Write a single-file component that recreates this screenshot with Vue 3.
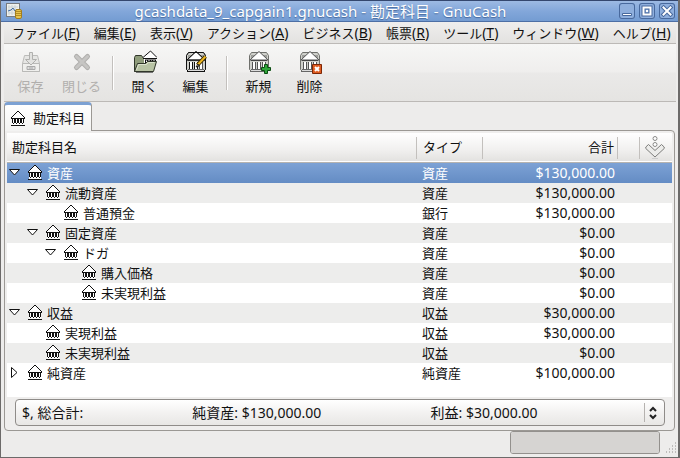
<script setup>
import { ref } from 'vue'

const menus = [
  ['ファイル', 'F'], ['編集', 'E'], ['表示', 'V'], ['アクション', 'A'], ['ビジネス', 'B'],
  ['帳票', 'R'], ['ツール', 'T'], ['ウィンドウ', 'W'], ['ヘルプ', 'H'],
]

const toolGroups = [
  [{ id: 'save', label: '保存', disabled: true }, { id: 'close', label: '閉じる', disabled: true }],
  [{ id: 'open', label: '開く' }, { id: 'edit', label: '編集' }],
  [{ id: 'new', label: '新規' }, { id: 'delete', label: '削除' }],
]

const accounts = [
  { name: '資産', type: '資産', total: '$130,000.00', level: 0, state: 'open' },
  { name: '流動資産', type: '資産', total: '$130,000.00', level: 1, state: 'open' },
  { name: '普通預金', type: '銀行', total: '$130,000.00', level: 2 },
  { name: '固定資産', type: '資産', total: '$0.00', level: 1, state: 'open' },
  { name: 'ドガ', type: '資産', total: '$0.00', level: 2, state: 'open' },
  { name: '購入価格', type: '資産', total: '$0.00', level: 3 },
  { name: '未実現利益', type: '資産', total: '$0.00', level: 3 },
  { name: '収益', type: '収益', total: '$30,000.00', level: 0, state: 'open' },
  { name: '実現利益', type: '収益', total: '$30,000.00', level: 1 },
  { name: '未実現利益', type: '収益', total: '$0.00', level: 1 },
  { name: '純資産', type: '純資産', total: '$100,000.00', level: 0, state: 'closed' },
]
const selected = ref(0)

const gap = '\u00a0'.repeat(30)
const summary = ['$, 総合計:', '純資産: $130,000.00', '利益: $30,000.00'].join(gap)
</script>

<template>
  <div class="window">
    <svg class="defs" width="0" height="0" aria-hidden="true">
      <symbol id="bank" viewBox="0 0 14 15">
        <path d="M6 1h2v1h1v1h2v1h1v1h1v1h1v2h-1v6H1V8H0V6h1V5h1V4h1V3h2V2h1z" fill="#fff" />
        <path d="M6 0h2v1H6zM5 1h1v1H5zM8 1h1v1H8zM4 2h1v1H4zM9 2h1v1H9zM3 3h1v1H3zM10 3h1v1h-1zM2 4h1v1H2zM11 4h1v1h-1zM1 5h1v1H1zM12 5h1v1h-1zM0 6h1v1H0zM13 6h1v1h-1zM0 7h14v1H0zM1 8h1v4H1zM3 8h2v4H3zM6 8h2v4H6zM9 8h2v4H9zM12 8h1v4h-1zM2 12h1v1H2zM5 12h1v1H5zM8 12h1v1H8zM11 12h1v1h-1zM0 14h14v1H0z" fill="#111" />
      </symbol>
      <symbol id="building" viewBox="0 0 24 24">
        <path d="M4.500 2.500h15l2 3v14l-2 2h-15l-2-2v-14z" fill="#cfd0cb" stroke="#6f706c" />
        <path d="M4 5h4v3H4zM16 5h4v3h-4z" fill="#9d9e9a" />
        <path d="M3 10 12 1.500 21 10z" fill="#fff" stroke="#555" />
        <path d="M4 10.500h16" stroke="#444" />
        <path d="M5 12h3v7H5zM10.500 12h3v7h-3zM16 12h3v7h-3z" fill="#fff" />
        <path d="M5.500 12v7M8.500 12v7M10.500 12v7M13.500 12v7M15.500 12v7M18.500 12v7" stroke="#555" />
        <path d="M4 19.500h16M3 21.500h18" stroke="#666" />
        <path d="M4 20.500h16" stroke="#ddd" />
      </symbol>
    </svg>

    <header class="titlebar">
      <svg class="app-icon" viewBox="0 0 16 16" aria-hidden="true">
        <rect x=".5" y=".5" width="13" height="13" fill="#eef0ec" stroke="#777b80" />
        <path d="M3 2v10M6 2v10M9 2v10M2 4h10M2 7h10M2 10h10" stroke="#cbd3d6" fill="none" />
        <path d="m2 8 3-1 2-2 2 3 2-2" stroke="#436ea5" fill="none" />
        <rect x="9.500" y="6.500" width="6" height="9" rx="1.500" fill="#e8c650" stroke="#a37d1c" />
        <path d="M10 8.500h5M10 10.500h5M10 12.500h5" stroke="#b28c24" />
      </svg>
      <h1>gcashdata_9_capgain1.gnucash - 勘定科目 - GnuCash</h1>
      <div class="win-buttons">
        <button aria-label="最小化"><svg viewBox="0 0 16 16"><path d="M3.500 10.500h9v2h-9z" fill="#fff" stroke="#48699d" /></svg></button>
        <button aria-label="最大化"><svg viewBox="0 0 16 16"><path d="M4.500 4.500h7v7h-7z" fill="none" stroke="#48699d" stroke-width="4" /><path d="M4.500 4.500h7v7h-7z" fill="none" stroke="#fff" stroke-width="2" /><path d="M7 7h2v2H7z" fill="#fff" /></svg></button>
        <button aria-label="閉じる"><svg viewBox="0 0 16 16"><path d="m4.500 4.500 7 7m0-7-7 7" stroke="#48699d" stroke-width="4" stroke-linecap="square" /><path d="m4.500 4.500 7 7m0-7-7 7" stroke="#fff" stroke-width="2" stroke-linecap="square" /></svg></button>
      </div>
    </header>

    <nav class="menubar">
      <button v-for="[label, key] in menus" :key="key">{{ label }}<span class="latin">(<u>{{ key }}</u>)</span></button>
    </nav>

    <div class="toolbar" role="toolbar">
      <div v-for="(group, i) in toolGroups" :key="i" class="group">
        <button v-for="t in group" :key="t.id" :disabled="t.disabled">
          <svg viewBox="0 0 24 24" aria-hidden="true">
            <template v-if="t.id === 'save'">
              <path d="M5.500 5.500h13l2 8v8h-17v-8z" fill="#e6e6e4" stroke="#bcbcba" />
              <path d="M3.500 13.500h17v8h-17z" fill="#efefed" stroke="#b9b9b7" />
              <path d="M10.500 2.500h3v7h4L12 15 6.500 9.500h4z" fill="#e2e2e0" stroke="#b0b0ae" />
              <path d="M8 16.500h8v3H8z" fill="#ddd" stroke="#aaa" />
              <path d="M10 18h4" stroke="#aaa" />
            </template>
            <template v-else-if="t.id === 'close'">
              <path d="m6.500 6.500 11 11m0-11-11 11" stroke="#b0afad" stroke-width="5" stroke-linecap="round" />
              <path d="m6.500 6.500 11 11m0-11-11 11" stroke="#c6c5c3" stroke-width="3" stroke-linecap="round" />
            </template>
            <template v-else-if="t.id === 'open'">
              <path d="M1.500 21.500V7.500l1-2h6l2 3h8v13z" fill="#8f9c7b" stroke="#30362a" />
              <path d="m10 7 7.500-6L24 7v2h-1v5H11V9h-1z" fill="#fff" />
              <path d="m10 7.500 7.500-6.500L24 7.500M10 8.500h14M12.500 10v5M14.500 10v5M17.500 10v5M19.500 10v5M22.500 10v5M12 10h11" fill="none" stroke="#111" />
              <path d="m1.500 21.500 3-8h8l2-2h9l-3 10z" fill="#b8c3a4" stroke="#30362a" />
              <path d="m3.500 20 2-5.500h8l2-2h6" fill="none" stroke="#dce3ce" />
              <path d="M3 22.500h17" stroke="#777" />
            </template>
            <template v-else>
              <use href="#building" />
              <template v-if="t.id === 'edit'">
                <path d="M4.500 2.500h15l2 3v14l-2 2h-15l-2-2v-14zM3 10l9-8.500 9 8.500zM5.500 12v7M8.500 12v7M10.500 12v7M13.500 12v7M3 21.500h18" fill="none" stroke="#111" />
                <path d="m21.500 6.500-8 8.500" stroke="#3c2c00" stroke-width="4" />
                <path d="m21.500 6.500-7.500 8" stroke="#eeb722" stroke-width="2" />
                <path d="m14 14-2 3 3-1z" fill="#f5deb0" stroke="#222" />
              </template>
              <path v-if="t.id === 'new'" d="M17.500 14.500h3v3h3v3h-3v3h-3v-3h-3v-3h3z" fill="#2fa53a" stroke="#0b4d12" />
              <template v-if="t.id === 'delete'">
                <path d="M14.500 14.500h9v9h-9z" fill="#df5c20" stroke="#7d2606" />
                <path d="m17 17 4 4m0-4-4 4" stroke="#fff" stroke-width="2" />
              </template>
            </template>
          </svg>
          <span>{{ t.label }}</span>
        </button>
      </div>
    </div>

    <main class="notebook">
      <div class="tabs" role="tablist">
        <button role="tab" aria-selected="true"><svg class="bank"><use href="#bank" /></svg>勘定科目</button>
      </div>
      <section class="page">
        <div class="tree">
          <table>
            <colgroup><col><col class="c-type"><col class="c-total"><col class="c-blank"><col class="c-more"></colgroup>
            <thead>
              <tr>
                <th scope="col">勘定科目名</th>
                <th scope="col">タイプ</th>
                <th scope="col" class="num">合計</th>
                <td></td>
                <td>
                  <button class="more" aria-label="列の選択">
                    <svg viewBox="0 0 20 24">
                      <path d="M7 23.500h6" stroke="#ccc" />
                      <circle cx="10" cy="3.500" r="2" fill="#fff" stroke="#8a8a88" />
                      <circle cx="10" cy="9.500" r="2" fill="#fff" stroke="#8a8a88" />
                      <path d="M.8 12 3.500 9.500 10 15.500 16.500 9.500 19.200 12V13.500L10 22 .8 13.500z" fill="#ececea" stroke="#7d7d7b" stroke-linejoin="round" />
                    </svg>
                  </button>
                </td>
              </tr>
            </thead>
            <tbody>
              <tr v-for="(a, i) in accounts" :key="i" :class="{ selected: i === selected }" @click="selected = i">
                <td>
                  <div class="name">
                    <span v-for="n in a.level" :key="n" class="indent"></span>
                    <span class="expander">
                      <svg v-if="a.state" viewBox="0 0 13 13" :class="a.state"><path d="M1.500 3.500h10l-5 5.500z" fill="#fff" stroke="#111" /></svg>
                    </span>
                    <svg class="bank"><use href="#bank" /></svg>
                    <span class="label">{{ a.name }}</span>
                  </div>
                </td>
                <td>{{ a.type }}</td>
                <td class="num latin">{{ a.total }}</td>
                <td></td>
                <td></td>
              </tr>
            </tbody>
          </table>
        </div>
        <div class="summary">
          <select aria-label="総合計"><option>{{ summary }}</option></select>
          <svg viewBox="0 0 8 14" aria-hidden="true"><path d="m1 5 3-3 3 3M1 9l3 3 3-3" fill="none" stroke="#222" stroke-width="2" /></svg>
        </div>
      </section>
    </main>

    <footer class="statusbar">
      <progress value="0" max="100" aria-label="進行状況"></progress>
      <svg class="grip" viewBox="0 0 12 12" aria-hidden="true"><path d="M10 1h1M7 4h1m2 0h1M4 7h1m2 0h1m2 0h1M1 10h1m2 0h1m2 0h1m2 0h1" stroke="#8f8d8b" /></svg>
    </footer>
  </div>
</template>

<style>
body { margin: 0; background: #edeceb; }
</style>

<style scoped>
*, *::before { box-sizing: border-box; }
.window {
  min-height: 100vh;
  display: flex;
  flex-direction: column;
  border: solid #6c6a69;
  border-width: 0 2px 1px 1px;
  background: #edeceb;
  color: #111;
  font: 13px/20px "Noto Sans CJK JP", sans-serif;
}
.defs { display: block; }
button { font: inherit; color: inherit; border: 0; padding: 0; background: none; white-space: nowrap; }
svg { display: block; flex: none; }
.latin { font-family: "Noto Sans", "Noto Sans CJK JP", sans-serif; font-size: 14px; }
.bank { width: 14px; height: 15px; shape-rendering: crispEdges; }

.titlebar {
  height: 22px;
  display: flex;
  align-items: center;
  padding: 0 3px 0 5px;
  border-top: 1px solid #34476e;
  border-bottom: 1px solid #4d6fa5;
  background: linear-gradient(#9dbae3, #83a7da 50%, #749cd2);
}
.app-icon { width: 16px; height: 16px; }
h1 {
  flex: 1;
  margin: 0;
  text-align: center;
  color: #fff;
  font: 15px/20px "Noto Sans", "Noto Sans CJK JP", sans-serif;
  text-shadow: 0 1px 1px #46689c;
}
.win-buttons { display: flex; gap: 4px; }
.win-buttons button { width: 16px; height: 16px; border-radius: 3px; background: #8fafdd; box-shadow: inset 0 0 0 1px #48699d; }
.win-buttons svg { width: 16px; height: 16px; }

.menubar {
  height: 22px;
  display: flex;
  gap: 14px;
  margin: 0 2px 0 3px;
  padding: 0 8px;
  border-bottom: 1px solid #bcb9b6;
  background: linear-gradient(#efeeed, #e3e2e0);
}
.menubar button { line-height: 21px; }

.toolbar {
  height: 58px;
  display: flex;
  margin: 0 2px 0 3px;
  padding-left: 1px;
  border-bottom: 1px solid #bcb9b6;
  background: linear-gradient(#f6f6f5, #efeeed 49%, #eae9e8 51%, #e5e4e2);
}
.group { display: flex; align-items: center; }
.group + .group::before { content: ""; width: 2px; height: 34px; margin: 0 5px; border-left: 1px solid #c3c0bd; border-right: 1px solid #fff; }
.group button { width: 51px; display: flex; flex-direction: column; align-items: center; }
.group svg { width: 24px; height: 24px; margin-bottom: 2px; }
.group button:disabled { color: #b1afad; }

.notebook { flex: 1; display: flex; flex-direction: column; margin: 0 3px; }
.tabs { height: 29px; display: flex; align-items: flex-start; margin-bottom: -1px; z-index: 1; }
.tabs button {
  height: 29px;
  display: flex;
  align-items: center;
  gap: 8px;
  padding: 0 6px;
  border: 1px solid #9b9894;
  border-top: 3px solid #7ca1d3;
  border-bottom: 0;
  border-radius: 4px 4px 0 0;
  background: linear-gradient(#fff, #f3f3f2);
}
.page {
  flex: 1;
  display: flex;
  flex-direction: column;
  padding: 2px;
  border: 1px solid #9b9894;
  border-radius: 0 4px 4px 4px;
  background: #efeeed;
}
.tree { flex: 1; background: #fff; }
table { width: 100%; table-layout: fixed; border-collapse: collapse; }
.c-type { width: 66px; }
.c-total { width: 135px; }
.c-blank { width: 22px; }
.c-more { width: 33px; }
th, td { padding: 0 0 0 6px; text-align: left; font-weight: normal; white-space: nowrap; }
th:first-child { padding-left: 5px; }
tbody td:first-child { padding: 0; }
.num { text-align: right; padding-right: 2px; }
thead tr { height: 29px; background: linear-gradient(#fff, #f1f0ef 60%, #e3e2e0); border-bottom: 1px solid #b5b3b0; }
thead th:not(:first-child), thead td { background: linear-gradient(#c3c0bd, #c3c0bd) 0 4px / 1px 22px no-repeat; }
thead th:first-child + th { padding-left: 7px; }
thead .num { padding-right: 3px; }
.more { display: block; }
.more svg { width: 20px; height: 24px; }
tbody tr { height: 20px; }
tbody tr:nth-child(even) { background: #ededec; }
tbody tr.selected { background: linear-gradient(#7ea3d6, #648cc4); color: #fff; }
td { height: 20px; line-height: 20px; }
.name { display: flex; align-items: center; height: 20px; }
.indent { width: 18px; }
.expander { width: 21px; padding-left: 1px; }
.expander svg { width: 13px; height: 13px; }
.expander .closed { transform: rotate(-90deg); }
.label { margin-left: 5px; }

.summary { display: grid; align-items: center; padding: 2px 7px 2px 8px; }
.summary select {
  grid-area: 1 / 1;
  appearance: none;
  width: 100%;
  height: 27px;
  padding: 0 24px 0 6px;
  border: 1px solid #8f8c89;
  border-radius: 4px;
  background: linear-gradient(#b5b2af, #b5b2af) right 19px center / 1px 19px no-repeat, linear-gradient(#fff, #f3f2f1 50%, #e8e7e5);
  color: #111;
  font: 14px/20px "Noto Sans", "Noto Sans CJK JP", sans-serif;
}
.summary svg { grid-area: 1 / 1; justify-self: end; width: 8px; height: 14px; margin-right: 8px; pointer-events: none; }

.statusbar { height: 26px; display: flex; justify-content: flex-end; align-items: flex-start; gap: 5px; padding-right: 1px; }
progress { appearance: none; width: 150px; height: 23px; border: 1px solid #93908d; border-radius: 3px; background: #d6d4d2; overflow: hidden; }
progress::-webkit-progress-bar { background: #d6d4d2; }
.grip { width: 12px; height: 12px; align-self: flex-end; margin-bottom: 3px; }
</style>
